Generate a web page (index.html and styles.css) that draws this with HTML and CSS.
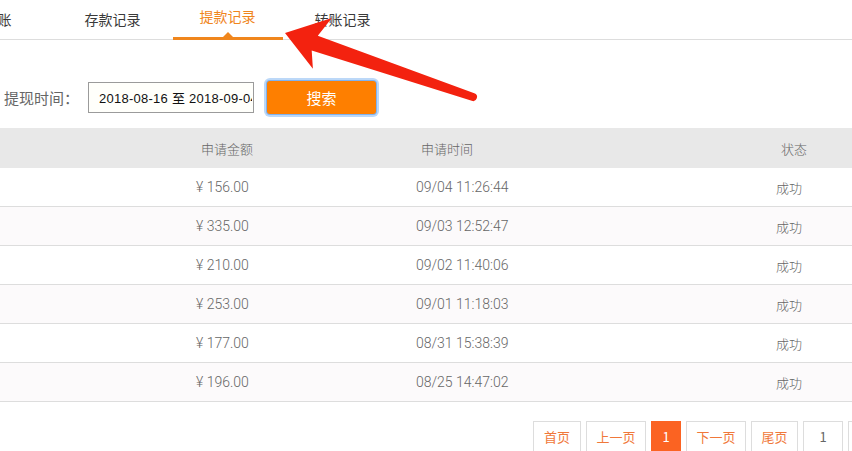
FILE: index.html
```html
<!DOCTYPE html>
<html lang="zh-CN">
<head>
<meta charset="utf-8">
<title>提款记录</title>
<link rel="stylesheet" href="styles.css">
</head>
<body>
<div class="page">
  <nav class="tabs">
    <div class="tab">转账</div>
    <div class="tab">存款记录</div>
    <div class="tab active">提款记录</div>
    <div class="tab">转账记录</div>
  </nav>

  <div class="search">
    <label class="search-label">提现时间：</label>
    <input class="date-input" type="text" value="2018-08-16 至 2018-09-04" readonly>
    <button class="search-btn">搜索</button>
  </div>

  <div class="table">
    <div class="row head">
      <div class="cell"></div>
      <div class="cell">申请金额</div>
      <div class="cell">申请时间</div>
      <div class="cell">状态</div>
    </div>
    <div class="row">
      <div class="cell"></div>
      <div class="cell num">¥ 156.00</div>
      <div class="cell num">09/04 11:26:44</div>
      <div class="cell">成功</div>
    </div>
    <div class="row">
      <div class="cell"></div>
      <div class="cell num">¥ 335.00</div>
      <div class="cell num">09/03 12:52:47</div>
      <div class="cell">成功</div>
    </div>
    <div class="row">
      <div class="cell"></div>
      <div class="cell num">¥ 210.00</div>
      <div class="cell num">09/02 11:40:06</div>
      <div class="cell">成功</div>
    </div>
    <div class="row">
      <div class="cell"></div>
      <div class="cell num">¥ 253.00</div>
      <div class="cell num">09/01 11:18:03</div>
      <div class="cell">成功</div>
    </div>
    <div class="row">
      <div class="cell"></div>
      <div class="cell num">¥ 177.00</div>
      <div class="cell num">08/31 15:38:39</div>
      <div class="cell">成功</div>
    </div>
    <div class="row">
      <div class="cell"></div>
      <div class="cell num">¥ 196.00</div>
      <div class="cell num">08/25 14:47:02</div>
      <div class="cell">成功</div>
    </div>
  </div>

  <div class="pager">
    <span class="pg w-first">首页</span>
    <span class="pg w-step">上一页</span>
    <span class="pg current">1</span>
    <span class="pg w-step">下一页</span>
    <span class="pg w-last">尾页</span>
    <span class="pg page-box">1</span>
    <span class="pg page-box"></span>
  </div>

  <svg class="annot" width="852" height="451" viewBox="0 0 852 451" aria-hidden="true">
    <path d="M285,33 L331.8,18.1 L317.8,35.7 L474.3,93.2 A4,4 0 0 1 471.7,100.8 L311.7,50.6 L312.9,68.8 Z" fill="#f3220f"/>
  </svg>
</div>
</body>
</html>
```

FILE: styles.css
```css
* { box-sizing: border-box; }

html, body {
  margin: 0;
  padding: 0;
  background: #ffffff;
  overflow: hidden;
}

body {
  width: 852px;
  height: 451px;
  font-family: "Noto Sans CJK SC", sans-serif;
  color: #444;
}

.page {
  position: relative;
  width: 852px;
  height: 451px;
  overflow: hidden;
}

/* Tabs */
.tabs {
  display: flex;
  height: 40px;
  border-bottom: 1px solid #dddddd;
  margin-left: -60px;
}

.tab {
  position: relative;
  width: 115px;
  height: 39px;
  line-height: 39px;
  text-align: center;
  font-size: 14px;
  color: #3a3a3a;
}

.tab.active {
  color: #f0861d;
  line-height: 33px;
}

.tab.active::after {
  content: "";
  position: absolute;
  left: 3px;
  width: 110px;
  bottom: -1px;
  height: 3px;
  background: #f0861d;
}

.tab.active::before {
  content: "";
  position: absolute;
  left: 53px;
  bottom: 2px;
  width: 0;
  height: 0;
  border-left: 5px solid transparent;
  border-right: 5px solid transparent;
  border-bottom: 5px solid #f0861d;
}

/* Search row */
.search {
  display: flex;
  align-items: center;
  height: 33px;
  margin-top: 41px;
  padding-left: 4px;
}

.search-label {
  width: 84px;
  font-size: 15px;
  color: #666;
}

.date-input {
  width: 166px;
  height: 31px;
  margin: 0;
  padding: 0 1px 0 10px;
  border: 1px solid #9b9b9b;
  background: #fffffb;
  font-family: "Liberation Sans", sans-serif;
  font-size: 13px;
  letter-spacing: 0.25px;
  color: #111;
  outline: none;
}

.search-btn {
  width: 109px;
  height: 33px;
  margin-left: 13px;
  border: none;
  border-radius: 3px;
  background: #fe7f00;
  color: #ffffff;
  font-family: "Noto Sans CJK SC", sans-serif;
  font-size: 15px;
  box-shadow: 0 0 0 1px #7fb2ef, 0 0 0 3px #bcd8f8;
  padding: 0;
}

/* Table */
.table {
  margin-top: 14px;
  font-family: Roboto, "Noto Sans CJK SC", sans-serif;
  font-weight: 300;
  font-size: 13px;
  color: #666;
}

.row {
  display: grid;
  grid-template-columns: 196px 220px 360px 1fr;
  align-items: center;
  height: 39px;
  border-bottom: 1px solid #dddddd;
}

.row:nth-child(odd) {
  background: #fcfafb;
}

.row.head {
  height: 40px;
  background: #e8e8e8;
  border-bottom: none;
}

.row.head .cell {
  padding-left: 5px;
}

.cell.num {
  font-size: 14px;
}

/* Pagination */
.pager {
  display: flex;
  gap: 5px;
  margin-top: 19px;
  padding-left: 533px;
  white-space: nowrap;
}

.pg {
  flex: none;
  height: 32px;
  line-height: 30px;
  padding: 0;
  border: 1px solid #dddddd;
  font-size: 13px;
  color: #f0783a;
  text-align: center;
}

.pg.w-first { width: 48px; }
.pg.w-step { width: 60px; }
.pg.w-last { width: 47px; }

.pg.current {
  width: 30px;
  background: #fb6322;
  border-color: #fb6322;
  color: #ffffff;
}

.pg.page-box {
  width: 40px;
  color: #666;
}

/* Annotation arrow */
.annot {
  position: absolute;
  left: 0;
  top: 0;
  pointer-events: none;
}
```
